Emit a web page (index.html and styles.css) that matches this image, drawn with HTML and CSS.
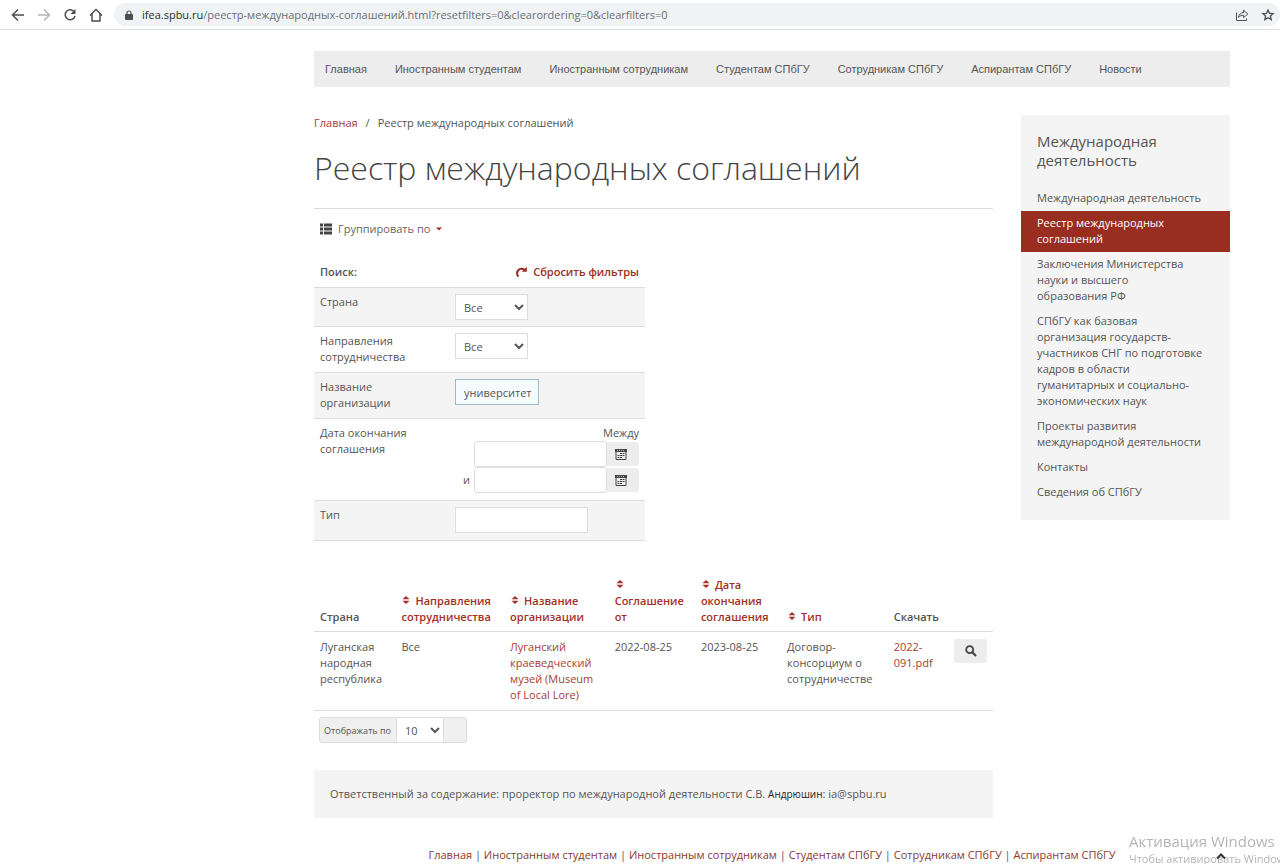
FILE: index.html
```html
<!DOCTYPE html>
<html lang="ru">
<head>
<meta charset="utf-8">
<title>Реестр международных соглашений</title>
<link rel="stylesheet" href="styles.css">
</head>
<body>
<svg class="sprite" width="0" height="0" aria-hidden="true">
  <symbol id="sort" viewBox="0 0 8 10"><path d="M4 1 7.500 4.300H.5zM4 9 .5 5.700h7z" fill="currentColor"/></symbol>
  <symbol id="calendar" viewBox="0 0 12 12"><path d="M1 1v10.500h10V1" fill="none" stroke="currentColor"/><path d="M0 1h12v3H0z" fill="currentColor"/><path d="M2 2.500h8" stroke="#bbb" stroke-dasharray="1 1"/><path d="M5 5.500h4.500M2.500 7.500h7M2.500 9.500h5" stroke="currentColor" stroke-dasharray="2 .5"/></symbol>
</svg>

<header class="browser">
  <button class="tool" aria-label="Назад"><svg width="14" height="14" viewBox="0 0 14 14"><path d="M13 7H2M7 1.500 1.500 7 7 12.500"/></svg></button>
  <button class="tool tool-off" aria-label="Вперёд"><svg width="14" height="14" viewBox="0 0 14 14"><path d="M1 7h11M7 1.500 12.500 7 7 12.500"/></svg></button>
  <button class="tool" aria-label="Обновить"><svg width="14" height="14" viewBox="0 0 14 14"><path d="M11.500 4.200A5 5 0 1 0 12 8"/><path d="M12.500 1v5h-5z" fill="#4b4e52" stroke="none"/></svg></button>
  <button class="tool" aria-label="Домой"><svg width="14" height="14" viewBox="0 0 14 14"><path d="M1 7.500 7 1.500l6 6M3 6v7h8V6"/></svg></button>
  <div class="address">
    <svg width="8" height="10" viewBox="0 0 8 10"><rect y="4" width="8" height="6" rx="1" fill="#4b4e52"/><path d="M2 4.500V3a2 2 0 0 1 4 0v1.500" fill="none" stroke="#4b4e52" stroke-width="1.200"/></svg>
    <span class="url"><span class="host">ifea.spbu.ru</span>/реестр-международных-соглашений.html?resetfilters=0&amp;clearordering=0&amp;clearfilters=0</span>
    <button class="tool tool-end" aria-label="Поделиться"><svg width="14" height="14" viewBox="0 0 14 14"><path d="M1.500 4.500V12.500h10V10.500M3.500 9.500c.4-3 2.100-4.700 5-4.900V2.200L12.800 6 8.500 9.500V7.300C6.400 7.200 4.800 8 3.500 9.500z" stroke-width="1"/></svg></button>
    <button class="tool tool-end" aria-label="В закладки"><svg width="14" height="14" viewBox="0 0 14 14"><path d="m7 2 1.500 3.300 3.600.3-2.700 2.400.8 3.600L7 9.700l-3.200 1.900.8-3.600L1.900 5.600l3.600-.3z" stroke-width="1.300"/></svg></button>
  </div>
</header>

<div class="page">
  <nav class="topnav">
    <a href="#">Главная</a><a href="#">Иностранным студентам</a><a href="#">Иностранным сотрудникам</a><a href="#">Студентам СПбГУ</a><a href="#">Сотрудникам СПбГУ</a><a href="#">Аспирантам СПбГУ</a><a href="#">Новости</a>
  </nav>

  <div class="columns">
    <main class="main">
      <div class="crumbs"><a href="#">Главная</a><span class="slash">/</span><span>Реестр международных соглашений</span></div>
      <h1>Реестр международных соглашений</h1>

      <button class="group">
        <svg width="12" height="12" viewBox="0 0 12 12"><path d="M0 .5h3v3H0zM4 .5h8v3H4zM0 4.500h3v3H0zM4 4.500h8v3H4zM0 8.500h3v3H0zM4 8.500h8v3H4z" fill="#444"/></svg>
        <span>Группировать по</span>
        <svg width="6" height="4" viewBox="0 0 6 4"><path d="M0 .5h6L3 3.500z" fill="#982d20"/></svg>
      </button>

      <form class="filters">
        <div class="row head">
          <strong>Поиск:</strong>
          <a class="reset" href="#"><svg width="12" height="12" viewBox="0 0 12 12"><path d="M3.500 10.500A4.400 4.400 0 1 1 9.500 4" fill="none" stroke="currentColor" stroke-width="2"/><path d="M11.800.8v5H6.800z" fill="currentColor"/></svg>Сбросить фильтры</a>
        </div>
        <div class="row odd first"><label for="country">Страна</label><div><select id="country" class="pick"><option>Все</option></select></div></div>
        <div class="row"><label for="area">Направления сотрудничества</label><div><select id="area" class="pick"><option>Все</option></select></div></div>
        <div class="row odd"><label for="org">Название организации</label><div><input id="org" class="org" type="text" value="университет"></div></div>
        <div class="row dates"><span>Дата окончания соглашения</span>
          <div class="range">
            <label for="from">Между</label>
            <div class="date"><input id="from" type="text"><button type="button" aria-label="Открыть календарь"><svg width="12" height="12"><use href="#calendar"/></svg></button></div>
            <div class="date"><label for="to">и</label><input id="to" type="text"><button type="button" aria-label="Открыть календарь"><svg width="12" height="12"><use href="#calendar"/></svg></button></div>
          </div>
        </div>
        <div class="row odd"><label for="type">Тип</label><div><input id="type" class="kind" type="text"></div></div>
      </form>

      <table class="list">
        <colgroup><col class="c1"><col class="c2"><col class="c3"><col class="c4"><col class="c5"><col class="c6"><col class="c7"><col class="c8"></colgroup>
        <thead>
          <tr>
            <th>Страна</th>
            <th><a href="#"><svg class="sort" width="8" height="10"><use href="#sort"/></svg>Направления сотрудничества</a></th>
            <th><a href="#"><svg class="sort" width="8" height="10"><use href="#sort"/></svg>Название организации</a></th>
            <th><a href="#"><svg class="sort" width="8" height="10"><use href="#sort"/></svg><br>Соглашение от</a></th>
            <th><a href="#"><svg class="sort" width="8" height="10"><use href="#sort"/></svg>Дата окончания соглашения</a></th>
            <th><a href="#"><svg class="sort" width="8" height="10"><use href="#sort"/></svg>Тип</a></th>
            <th>Скачать</th>
            <th></th>
          </tr>
        </thead>
        <tbody>
          <tr>
            <td>Луганская народная республика</td>
            <td>Все</td>
            <td><a href="#">Луганский краеведческий музей (Museum of Local Lore)</a></td>
            <td>2022-08-25</td>
            <td>2023-08-25</td>
            <td>Договор-консорциум о сотрудничестве</td>
            <td><a href="#">2022-091.pdf</a></td>
            <td><button class="view" aria-label="Просмотр"><svg width="12" height="12" viewBox="0 0 12 12"><circle cx="4.700" cy="4.700" r="3.500" fill="none" stroke="#444" stroke-width="1.800"/><path d="m7.300 7.300 3.700 3.700" stroke="#444" stroke-width="2.200"/></svg></button></td>
          </tr>
        </tbody>
      </table>

      <div class="pager"><label for="limit">Отображать по</label><select id="limit"><option>10</option></select><span class="pager-end"></span></div>

      <div class="notice">Ответственный за содержание: проректор по международной деятельности С.В. <span class="name">Андрюшин</span>: ia@spbu.ru</div>
    </main>

    <aside class="side">
      <h2>Международная деятельность</h2>
      <nav>
        <a href="#">Международная деятельность</a>
        <a href="#" class="active">Реестр международных соглашений</a>
        <a href="#">Заключения Министерства<br>науки и высшего<br>образования РФ</a>
        <a href="#">СПбГУ как базовая<br>организация государств-<br>участников СНГ по подготовке<br>кадров в области<br>гуманитарных и социально-экономических наук</a>
        <a href="#">Проекты развития международной деятельности</a>
        <a href="#">Контакты</a>
        <a href="#">Сведения об СПбГУ</a>
      </nav>
    </aside>
  </div>

  <footer class="footer"><a href="#">Главная</a> | <a href="#">Иностранным студентам</a> | <a href="#">Иностранным сотрудникам</a> | <a href="#">Студентам СПбГУ</a> | <a href="#">Сотрудникам СПбГУ</a> | <a href="#">Аспирантам СПбГУ</a></footer>
</div>

<div class="activation"><div class="activation-title">Активация Windows</div><div class="activation-text">Чтобы активировать Windows</div></div>
<a class="to-top" href="#" aria-label="Наверх"><svg width="10" height="7" viewBox="0 0 10 7"><path d="m1 5.500 4-4 4 4" fill="none" stroke="#333" stroke-width="2"/></svg></a>
</body>
</html>
```
FILE: styles.css
```css
* { box-sizing: border-box; }
body { margin: 0; background: #fff; color: #555; font: 11px/16px "Open Sans", "Noto Sans", sans-serif; overflow: hidden; height: 100vh; }
a { color: #a8402f; text-decoration: none; }
button, input, select { font: inherit; color: inherit; margin: 0; }
button { border: 0; background: none; padding: 0; cursor: pointer; }
svg { flex: none; }
.sprite { position: absolute; }

/* browser toolbar */
.browser { display: flex; align-items: center; gap: 12px; height: 30px; padding-left: 11px; border-bottom: 1px solid #dcdfe2; }
.tool { display: flex; }
.tool svg { fill: none; stroke: #4b4e52; stroke-width: 1.5; }
.tool-off svg { stroke: #b4b6b9; }
.address { flex: 1; min-width: 0; display: flex; align-items: center; gap: 12px; height: 23px; margin-left: -1px; padding: 0 5px 0 11px; border-radius: 12px; background: #f0f3f5; color: #6c7074; }
.address > svg { margin-right: -3px; }
.url { flex: 1; white-space: nowrap; overflow: hidden; }
.host { color: #2b2d30; }

.page { padding: 21px 50px 0 314px; }
.topnav { display: flex; gap: 28px; padding: 10px 11px; background: #ededed; font: 11px/16px "Liberation Sans", sans-serif; }
.topnav a { color: #555; white-space: nowrap; }

.columns { display: flex; align-items: flex-start; gap: 28px; padding-top: 28px; }
.main { flex: 1; min-width: 0; }
.crumbs { display: flex; gap: 8px; }
h1 { margin: 0; padding: 16px 0 19px; border-bottom: 1px solid #ddd; font-size: 32px; line-height: 42px; font-weight: 300; color: #444; }
.group { display: flex; align-items: center; gap: 6px; padding: 12px 6px 0; color: #666; }

.filters { width: 331px; margin-top: 21px; }
.row { display: grid; grid-template-columns: 135px 1fr; padding: 6px 6px 7px; border-bottom: 1px solid #ddd; }
.row > label, .row > span { padding-right: 30px; }
.odd { background: #f4f4f4; }
.first { padding-bottom: 6px; }
.head { align-items: center; }
.head strong { font-weight: 600; }
.reset { display: flex; justify-content: flex-end; align-items: center; gap: 6px; font-weight: 600; color: #982d20; }
.row > div { display: flex; }
input, select { border: 1px solid #ddd; background: #fff; height: 26px; padding: 0 8px; }
.pick { width: 73px; padding: 0 0 0 4px; }
.org { width: 84px; border-color: #99baca; background: #f5fbfe; padding: 0 4px 0 8px; }
.kind { width: 133px; }
.dates .range { display: flex; flex-direction: column; align-items: flex-end; }
.date { display: flex; align-items: center; }
.date label { margin-right: 4px; }
.date input { width: 133px; border-radius: 3px; }
.date button { width: 32px; height: 24px; background: #ededed; border-radius: 0 3px 3px 0; display: flex; align-items: center; justify-content: center; color: #444; padding-right: 4px; }

.list { width: 100%; margin-top: 29px; border-collapse: collapse; table-layout: fixed; }
.list th, .list td { padding: 7px 6px; text-align: left; border-bottom: 1px solid #ddd; }
.list th { vertical-align: bottom; font-weight: 600; padding-bottom: 6px; }
.list th a { color: #a33024; }
.list td { vertical-align: top; }
.sort { margin: 0 5px 0 1px; }
.c1 { width: 12%; } .c2 { width: 16%; } .c3 { width: 15.400%; } .c4 { width: 12.700%; } .c5 { width: 12.700%; } .c6 { width: 15.700%; } .c7 { width: 8.900%; }
.view { width: 33px; height: 24px; border-radius: 2px; background: #ededed; display: flex; align-items: center; justify-content: center; }

.pager { display: flex; width: max-content; margin: 6px 0 0 5px; border: 1px solid #ddd; border-radius: 3px; background: #f0f0f0; height: 26px; }
.pager label { font-size: 9px; line-height: 26px; padding: 0 5px 0 4px; }
.pager select { height: 24px; width: 48px; border: 0; border-left: 1px solid #ddd; border-right: 1px solid #ddd; padding: 0 0 0 4px; }
.pager-end { width: 22px; }
.notice { margin-top: 27px; padding: 16px; background: #f4f4f4; }
.name { color: #222; font-size: 10px; }

.side { width: 209px; background: #f4f4f4; padding: 17px 0 15px; }
.side h2 { margin: 0; padding: 0 16px 16px; font-size: 15px; line-height: 19px; font-weight: 400; }
.side a { display: block; padding: 4px 16px 5px; color: #555; }
.side .active { background: #982d20; color: #fff; }

.footer { padding-top: 29px; text-align: center; white-space: nowrap; }
.footer a { color: #8a3a30; }

.activation { position: fixed; right: 0; bottom: 0; width: 151px; height: 32px; overflow: hidden; white-space: nowrap; color: #b5b5b5; }
.activation-title { font-size: 15px; line-height: 19px; }
.activation-text { font-size: 11px; line-height: 16px; }
.to-top { position: fixed; right: 54px; bottom: 4px; line-height: 0; }
```
